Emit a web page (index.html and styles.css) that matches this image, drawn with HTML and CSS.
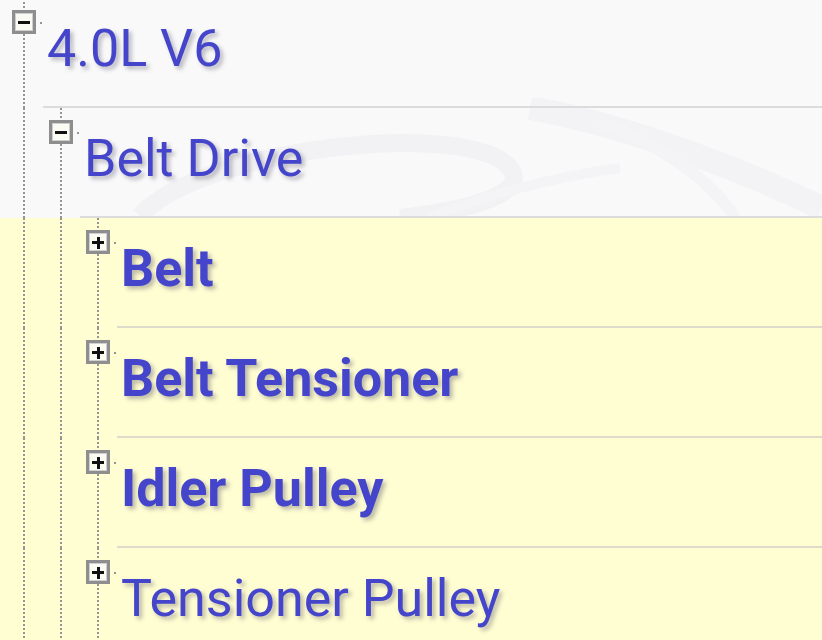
FILE: index.html
```html
<!DOCTYPE html>
<html lang="en">
<head>
    <meta charset="UTF-8">
    <meta name="viewport" content="width=device-width, initial-scale=1.0">
    <title>4.0L V6 - Belt Drive</title>
    <link rel="stylesheet" href="styles.css">
</head>
<body>
    <div class="tree">
        <!-- faint watermark behind the header rows -->
        <svg class="watermark" width="822" height="120" viewBox="0 0 822 120">
            <path d="M140 118 C 200 50, 470 20, 510 70 C 530 95, 470 112, 400 120" fill="none" stroke="#f2f2f4" stroke-width="18"/>
            <path d="M530 10 C 640 30, 760 80, 822 110" fill="none" stroke="#f3f3f5" stroke-width="24"/>
            <path d="M600 24 C 680 55, 720 95, 735 120" fill="none" stroke="#f4f4f6" stroke-width="12"/>
            <path d="M430 120 C 490 95, 560 78, 620 70" fill="none" stroke="#f4f4f6" stroke-width="10"/>
        </svg>

        <div class="row lvl0 first">
            <span class="toggle open"></span>
            <div class="label">4.0L V6</div>
        </div>
        <div class="row lvl1">
            <span class="toggle open"></span>
            <div class="label">Belt Drive</div>
        </div>
        <div class="row lvl2">
            <span class="toggle"></span>
            <div class="label bold">Belt</div>
        </div>
        <div class="row lvl2">
            <span class="toggle"></span>
            <div class="label bold">Belt Tensioner</div>
        </div>
        <div class="row lvl2">
            <span class="toggle"></span>
            <div class="label bold">Idler Pulley</div>
        </div>
        <div class="row lvl2">
            <span class="toggle"></span>
            <div class="label">Tensioner Pulley</div>
        </div>
    </div>
</body>
</html>
```

FILE: styles.css
```css
* {
    margin: 0;
    padding: 0;
    box-sizing: border-box;
}

body {
    font-family: 'Roboto', 'Noto Sans', sans-serif;
    background-color: #f9f9fa;
    height: 640px;
    overflow: hidden;
}

.tree {
    position: relative;
}

.watermark {
    position: absolute;
    top: 100px;
    left: 0;
    z-index: 0;
}

.row {
    position: relative;
    z-index: 1;
    display: flex;
    align-items: flex-start;
    height: 110px;
    background-repeat: repeat-y;
    background-size: 2px 4px;
}

.row.first {
    margin-top: -2px;
}

/* dotted tree guides, one per level */
.lvl0 {
    padding-left: 12px;
    background-image: linear-gradient(#959595 50%, transparent 50%);
    background-position: 23px 0;
}

.lvl1 {
    padding-left: 49px;
    background-image:
        linear-gradient(#959595 50%, transparent 50%),
        linear-gradient(#959595 50%, transparent 50%);
    background-position: 23px 0, 60px 0;
}

.lvl2 {
    padding-left: 86px;
    background-color: #fffdd2;
    background-image:
        linear-gradient(#959595 50%, transparent 50%),
        linear-gradient(#959595 50%, transparent 50%),
        linear-gradient(#959595 50%, transparent 50%);
    background-position: 23px 0, 60px 0, 97px 0;
}

.toggle {
    position: relative;
    flex: none;
    width: 24px;
    height: 24px;
    margin-top: 12px;
    margin-right: 7px;
    border: 3px solid #8e8e8e;
    background-color: #fbfbf4;
    box-shadow: inset 0 0 0 1px #cfcfcf;
}

.toggle::before {
    content: "";
    position: absolute;
    left: 3px;
    top: 8px;
    width: 12px;
    height: 3px;
    background-color: #111;
}

.toggle:not(.open)::after {
    content: "";
    position: absolute;
    left: 7.5px;
    top: 3.5px;
    width: 3px;
    height: 12px;
    background-color: #111;
}

/* small connector dot to the right of the box */
.row::after {
    content: "";
    position: absolute;
    top: 24px;
    width: 2px;
    height: 2px;
    background-color: #959595;
}

.lvl0::after { left: 40px; }
.lvl1::after { left: 77px; }
.lvl2::after { left: 114px; }

.label {
    flex: 1;
    align-self: stretch;
    padding-top: 21px;
    padding-left: 4px;
    border-bottom: 2px solid #dcdcdc;
    font-size: 52px;
    line-height: 60px;
    color: #4545cc;
    text-shadow: 3px 3px 4px rgba(60, 60, 80, 0.35);
    white-space: nowrap;
}

.lvl2 .label {
    border-bottom-color: #dddccb;
}

.bold {
    font-weight: 700;
}
```
